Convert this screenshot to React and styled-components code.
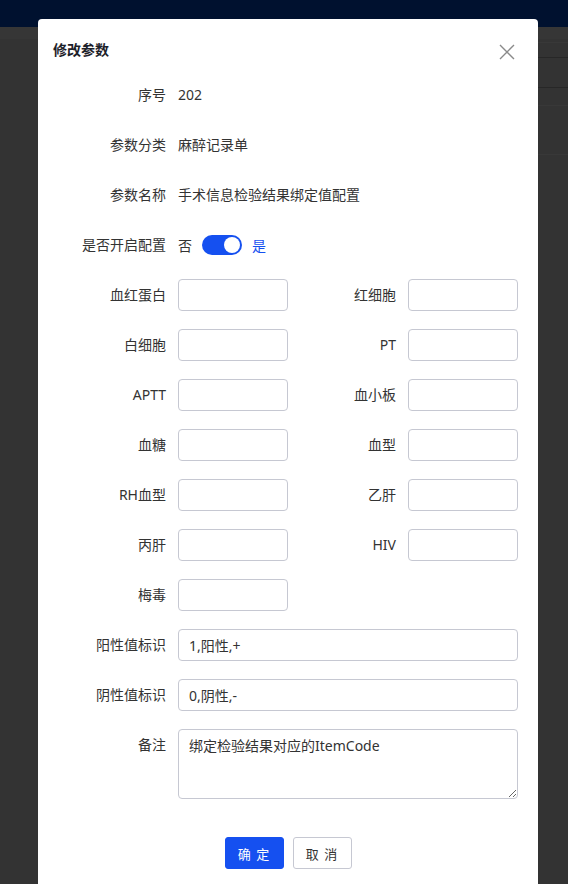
import React, { useState } from "react"
import styled, { createGlobalStyle, css } from "styled-components"

const GlobalStyle = createGlobalStyle`
  html, body {
    margin: 0;
    padding: 0;
    background: #333;
  }
  body {
    font-family: "Noto Sans", "Noto Sans CJK SC", sans-serif;
    font-size: 14px;
  }
  * {
    box-sizing: border-box;
  }
`

const Page = styled.div`
  position: relative;
  width: 568px;
  height: 884px;
  overflow: hidden;
  background: #333;
`

const TopBar = styled.div`
  height: 27px;
  background: #00112f;
`

const SubBar = styled.div`
  height: 12px;
  background: #363636;
`

const BgTable = styled.div`
  margin-left: 300px;
  display: flex;
  flex-direction: column;
`

const BgRow = styled.div`
  height: ${p => p.h}px;
  border-bottom: 1px solid ${p => (p.dark ? "#272727" : "#383838")};
`

const Modal = styled.div`
  position: absolute;
  top: 19px;
  left: 38px;
  width: 500px;
  min-height: 900px;
  background: #fff;
  border-radius: 4px 4px 0 0;
`

const Header = styled.div`
  display: flex;
  align-items: center;
  justify-content: space-between;
  height: 60px;
  padding: 0 22px 0 15px;
`

const Title = styled.div`
  font-size: 14px;
  font-weight: 600;
  color: #1d2129;
  line-height: 22px;
  margin-top: 1px;
`

const Close = styled.button`
  border: 0;
  background: none;
  padding: 0;
  width: 18px;
  height: 18px;
  margin-top: 6px;
  display: flex;
  align-items: center;
  justify-content: center;
  cursor: pointer;
`

const Form = styled.div`
  display: flex;
  flex-direction: column;
  gap: 18px;
`

const Row = styled.div`
  display: grid;
  align-items: center;
  ${p =>
    p.split
      ? css`
          grid-template-columns: 140px 110px 120px 110px;
        `
      : css`
          grid-template-columns: 140px 340px;
        `}
  min-height: 32px;
`

const Label = styled.label`
  text-align: right;
  padding-right: 12px;
  color: #333;
  font-size: 14px;
  line-height: 20px;
  align-self: ${p => (p.top ? "start" : "center")};
  margin-top: ${p => (p.top ? "6px" : "0")};
`

const Value = styled.div`
  color: #333;
  font-size: 14px;
  line-height: 20px;
`

const Input = styled.input`
  height: 32px;
  width: 100%;
  border: 1px solid #c6c8d2;
  border-radius: 4px;
  padding: 0 10px;
  font-family: inherit;
  font-size: 14px;
  color: #333;
  outline: none;
`

const TextArea = styled.textarea`
  height: 70px;
  width: 100%;
  border: 1px solid #c6c8d2;
  border-radius: 4px;
  padding: 6px 10px;
  font-family: inherit;
  font-size: 14px;
  line-height: 20px;
  color: #333;
  resize: vertical;
  outline: none;
`

const SwitchWrap = styled.div`
  display: flex;
  align-items: center;
  gap: 10px;
  font-size: 14px;
`

const SwitchText = styled.span`
  color: ${p => (p.active ? "#1550f0" : "#333")};
`

const Track = styled.button`
  position: relative;
  width: 40px;
  height: 20px;
  border-radius: 10px;
  border: 0;
  padding: 0;
  background: ${p => (p.on ? "#1550f0" : "#c9cdd4")};
  cursor: pointer;
`

const Knob = styled.span`
  position: absolute;
  top: 2px;
  left: ${p => (p.on ? "22px" : "2px")};
  width: 16px;
  height: 16px;
  border-radius: 50%;
  background: #fff;
`

const Footer = styled.div`
  display: flex;
  justify-content: center;
  gap: 9px;
  padding-top: 38px;
`

const Button = styled.button`
  height: 32px;
  width: 59px;
  border-radius: 3px;
  font-family: inherit;
  font-size: 13px;
  letter-spacing: 1px;
  cursor: pointer;
  ${p =>
    p.primary
      ? css`
          background: #1550f0;
          border: 1px solid #1550f0;
          color: #fff;
        `
      : css`
          background: #fff;
          border: 1px solid #c6c8d2;
          color: #333;
        `}
`

const pairs = [
  ["血红蛋白", "红细胞"],
  ["白细胞", "PT"],
  ["APTT", "血小板"],
  ["血糖", "血型"],
  ["RH血型", "乙肝"],
  ["丙肝", "HIV"],
  ["梅毒", null],
]

export default function App() {
  const [on, setOn] = useState(true)

  return (
    <>
      <GlobalStyle />
      <Page>
        <TopBar />
        <SubBar />
        <BgTable>
          <BgRow h={4} />
          <BgRow h={15} dark />
          <BgRow h={30} dark />
          <BgRow h={18} />
          <BgRow h={49} />
        </BgTable>

        <Modal>
          <Header>
            <Title>修改参数</Title>
            <Close aria-label="close">
              <svg width="16" height="16" viewBox="0 0 16 16">
                <path
                  d="M1 1L15 15M15 1L1 15"
                  stroke="#8a8a8a"
                  strokeWidth="1.4"
                  fill="none"
                />
              </svg>
            </Close>
          </Header>

          <Form>
            <Row>
              <Label>序号</Label>
              <Value>202</Value>
            </Row>
            <Row>
              <Label>参数分类</Label>
              <Value>麻醉记录单</Value>
            </Row>
            <Row>
              <Label>参数名称</Label>
              <Value>手术信息检验结果绑定值配置</Value>
            </Row>
            <Row>
              <Label>是否开启配置</Label>
              <SwitchWrap>
                <SwitchText active={!on}>否</SwitchText>
                <Track on={on} onClick={() => setOn(!on)}>
                  <Knob on={on} />
                </Track>
                <SwitchText active={on}>是</SwitchText>
              </SwitchWrap>
            </Row>

            {pairs.map(([a, b]) => (
              <Row split key={a}>
                <Label>{a}</Label>
                <Input />
                {b && <Label>{b}</Label>}
                {b && <Input />}
              </Row>
            ))}

            <Row>
              <Label>阳性值标识</Label>
              <Input defaultValue="1,阳性,+" />
            </Row>
            <Row>
              <Label>阴性值标识</Label>
              <Input defaultValue="0,阴性,-" />
            </Row>
            <Row>
              <Label top>备注</Label>
              <TextArea defaultValue="绑定检验结果对应的ItemCode" />
            </Row>
          </Form>

          <Footer>
            <Button primary>确 定</Button>
            <Button>取 消</Button>
          </Footer>
        </Modal>
      </Page>
    </>
  )
}
